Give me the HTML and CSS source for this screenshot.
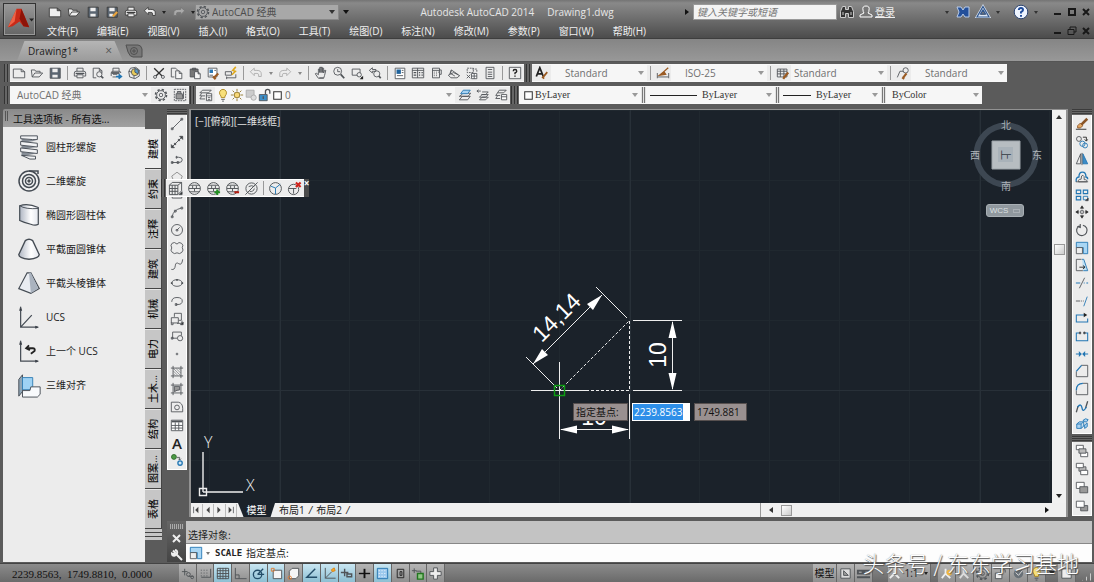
FILE: index.html
```html
<!DOCTYPE html>
<html lang="zh-CN">
<head>
<meta charset="utf-8">
<title>Autodesk AutoCAD 2014 Drawing1.dwg</title>
<link rel="stylesheet" href="styles.css">
</head>
<body>
<svg class="sprite" aria-hidden="true">
  <symbol id="new" viewBox="0 0 16 16"><path d="M1.500 3.500h9l4 3v7h-13zM10.500 3.500v3h4"/></symbol>
  <symbol id="open" viewBox="0 0 16 16"><path d="M2.500 12.500l-1-8h4l1 1.500h5v2M2.500 12.500l3-4.500h9l-4 4.500z"/></symbol>
  <symbol id="save" viewBox="0 0 16 16"><path class="dkfill" d="M2.500 2.500h11.500v11.500h-11.500v-11z"/><path class="whitefill" d="M5 3h6v4h-6zM5 10h6v3h-6z"/></symbol>
  <symbol id="saveas" viewBox="0 0 16 16"><path class="dkfill" d="M2.500 2.500h11.500v11.500h-11.500v-11z"/><path class="whitefill" d="M5 3h6v4h-6zM5 10h4v3h-4z"/><path d="M9 13l5-5" stroke="#e8a33d" stroke-width="2.500"/></symbol>
  <symbol id="print" viewBox="0 0 16 16"><path d="M4.500 6v-3.500h7v3.500M1.500 11.500v-3.500q0-2 2-2h9q2 0 2 2v3.500h-2M1.500 11.500h3M4.500 10h7v3.500h-7z"/><path d="M3 8.500h10" stroke-width="1.500"/></symbol>
  <symbol id="preview" viewBox="0 0 16 16"><path d="M6 13.500h-3.500v-11h7l3 3v3M9.500 2.500v3h3"/><circle cx="9.500" cy="9.500" r="3"/><path d="M11.500 11.500l2.500 2.500" stroke-width="2"/></symbol>
  <symbol id="publish" viewBox="0 0 16 16"><path d="M4.500 6v-3.500h7v3.500M2.500 11.500v-3.500q0-2 2-2h7q2 0 2 2M4.500 9.500h5M4 12.500h4"/><path d="M3 8h9" stroke-width="2"/><path class="blue" d="M8 12h5M11 9.500l3 2.500-3 2.500" stroke-width="2"/></symbol>
  <symbol id="globe" viewBox="0 0 16 16"><path d="M4 2.500l6-1 4 3v7l-5 3-6-2-1-6zM2 6l6 2 6-3M8 8v6"/><circle cx="9" cy="7" r="4" fill="#e9cb59"/><path d="M9 7v-4a4 4 0 0 1 3.500 6z" fill="#5b9fce"/></symbol>
  <symbol id="cut" viewBox="0 0 16 16"><path d="M2.500 2.500l9 9M13.500 2.500l-9 9" stroke="#333" stroke-width="1.500"/><circle cx="3.500" cy="12.500" r="1.700"/><circle cx="12.500" cy="12.500" r="1.700"/></symbol>
  <symbol id="copy" viewBox="0 0 16 16"><path d="M5 12.500h-3.500v-10h5l3 3"/><path fill="#f5f5f5" d="M6.500 5.500h4l3 3v6h-7zM10.500 5.500v3h3"/></symbol>
  <symbol id="paste" viewBox="0 0 16 16"><path fill="#777" d="M2.500 3.500h9v9h-9zM5 2.500h4v2h-4z"/><path fill="#f5f5f5" d="M7.500 6.500h4l2.500 2.500v5.500h-6.500zM11.500 6.500v2.500h2.500"/></symbol>
  <symbol id="match" viewBox="0 0 16 16"><path fill="#fff" d="M2.500 2.500h10v10h-10z"/><path fill="#2a78b5" stroke="none" d="M4 4h4v4h-4z"/><path d="M9.500 5h2M4 10.500h4"/><path d="M9 13.500l5-5M8 12l3 3" stroke="#9a5a22" stroke-width="2.500"/></symbol>
  <symbol id="bedit" viewBox="0 0 16 16"><path d="M1.500 6.500h7v4h-7zM3 13.500h10.500v-4M3 12v3"/><path d="M13.500 1l-3.500 4 3 1-4 4" stroke="#dfa91c" stroke-width="1.800"/></symbol>
  <symbol id="undo" viewBox="0 0 16 16"><path d="M1.500 6.500l4.500-4v2.500h3q5 0 5 4v3h-3v-2q0-1.500-2-1.500h-3v2.500z"/></symbol>
  <symbol id="redo" viewBox="0 0 16 16"><path d="M14.500 6.500l-4.500-4v2.500h-3q-5 0-5 4v3h3v-2q0-1.500 2-1.500h3v2.500z"/></symbol>
  <symbol id="hand" viewBox="0 0 16 16"><path d="M5 14l-3.500-5 1-1 2.500 2v-6.500h1.500v4-6h1.500v6-6h1.500v6-5h1.500v5.500l1-3h1.500l-1.500 6-1 3zM6 13.500h5"/></symbol>
  <symbol id="zoomrt" viewBox="0 0 16 16"><circle cx="6.500" cy="6" r="4.500"/><path d="M6.500 3.500v3h3"/><path d="M10 9.500l4 4.500" stroke-width="2"/></symbol>
  <symbol id="zoomwin" viewBox="0 0 16 16"><path d="M2.500 3.500h9v7h-9z"/><circle cx="10.500" cy="10" r="2.500" fill="#eee"/><path d="M12 12l2 2"/><path fill="#222" stroke="none" d="M11 15h4v-4z"/></symbol>
  <symbol id="zoomprev" viewBox="0 0 16 16"><path d="M1.500 5l3.500-3v2h4v2h-4v2z"/><circle cx="10" cy="9" r="3.500"/><path d="M12.500 11.500l2 2.500" stroke-width="2"/></symbol>
  <symbol id="props" viewBox="0 0 16 16"><path fill="#fff" d="M2.500 2.500h11v12h-11z"/><path fill="#1f639c" stroke="none" d="M4 4h5v5h-5z"/><path d="M10 5h2M10 7.500h2M4.500 11h7"/></symbol>
  <symbol id="grid" viewBox="0 0 16 16"><path d="M1.500 2.500h13v11h-13zM1.500 5h13M7.500 2.500v11"/><path d="M3 7.500h3M3 10.500h3M9 7.500h1.500M12 7.500h1.500M9 10.500h1.500M12 10.500h1.500" stroke-width="1.500"/></symbol>
  <symbol id="palette" viewBox="0 0 16 16"><path d="M4 2.500h8v11h-8zM4 5h8M5.500 7h1M8 7h1M10.500 7h1M5.500 9h1M8 9h1M5.500 11h1M8 11h1M12 4.500h2v5h-2"/></symbol>
  <symbol id="markup" viewBox="0 0 16 16"><path d="M1.500 10.500l6-3 7 3.500-3 2.500h-7zM3 9.500l2-5 8 5.500M5 4.500l-1 4 5 3"/></symbol>
  <symbol id="sheet" viewBox="0 0 16 16"><path stroke-dasharray="2 1" d="M2.500 2.500h7v5h-7zM8.500 3.500h5v4"/><path fill="#fff" d="M7.500 8.500h6v6h-6zM7.500 11.500h6M10.500 8.500v6"/><path d="M2 10l4 4M2 14l4-4"/></symbol>
  <symbol id="calc" viewBox="0 0 16 16"><path d="M3.500 1.500h9v13h-9zM5.500 4h5M5.500 7h5M5.500 9.500h5M5.500 12h5"/></symbol>
  <symbol id="helpbox" viewBox="0 0 16 16"><path d="M1.500 1.500h13v13h-13z"/><path d="M6 6q0-2 2-2t2 2q0 1-2 2v1.500M8 10.800v1.500" stroke="#222" stroke-width="1.600"/></symbol>
  <symbol id="astyle" viewBox="0 0 16 16"><path stroke="#222" d="M1.500 12l4-10 4 10M3 9h5" stroke-width="2"/><path d="M9 13l5-6M8 12.500l2.500 2" stroke="#9a5a22" stroke-width="2"/></symbol>
  <symbol id="dstyle" viewBox="0 0 16 16"><path d="M1.500 8v6M14.500 8v6M2 12.500h12"/><path d="M6 9l8-7M4 10.500l5-4 2 3z" stroke="#9a5a22" stroke-width="1.500" fill="#9a5a22"/></symbol>
  <symbol id="tstyle" viewBox="0 0 16 16"><path d="M1.500 3.500h11v9h-11zM1.500 6h11M1.500 9h11M5 3.500v9M9 3.500v9"/><path d="M9 13.500l5-6M8 13l2 1.500" stroke="#9a5a22" stroke-width="2.500"/></symbol>
  <symbol id="mstyle" viewBox="0 0 16 16"><path d="M1.500 13l3-7h4" /><circle cx="11" cy="5" r="3"/><path d="M8 13.500l4-5M7 13l2.500 1.500" stroke="#9a5a22" stroke-width="2.500"/></symbol>
  <symbol id="gear" viewBox="0 0 16 16"><circle cx="8" cy="8" r="6.300" stroke-dasharray="2.600 2.350" stroke-width="1.800"/><circle cx="8" cy="8" r="5"/><circle cx="8" cy="8" r="2"/></symbol>
  <symbol id="mypal" viewBox="0 0 16 16"><path stroke-dasharray="2 1" d="M1.500 1.500h13v13h-13z"/><path d="M3.500 12.500v-6h7l1 6zM5 6v-2h4v2M12 4v8" fill="#999"/></symbol>
  <symbol id="laymgr" viewBox="0 0 16 16"><path d="M4 2.500h10l-3 3h-10zM3 6l-2 3h6M3 9.500l-2 3h6"/><path fill="#fff" d="M8.500 6.500h6v8h-6zM8.500 9h6M10 11h3M10 13h3"/></symbol>
  <symbol id="bulb" viewBox="0 0 16 16"><path d="M6 11q0-2-1.500-3.500a4 4 0 1 1 7 0q-1.500 1.500-1.500 3.500z" fill="#f8e07a" stroke="#a8841e"/><path d="M6 13h4M7 15h2"/></symbol>
  <symbol id="sun" viewBox="0 0 16 16"><circle cx="8" cy="8" r="3.200" fill="#f8d878" stroke="#8f7224"/><path stroke="#8f7224" d="M8 1v3M8 12v3M1 8h3M12 8h3M3 3l2 2M11 11l2 2M3 13l2-2M11 5l2-2"/></symbol>
  <symbol id="vpf" viewBox="0 0 16 16"><path stroke="#aaa" fill="#ccc" d="M2.500 2.500h9v8h-9z"/><circle cx="11" cy="11" r="3" stroke="#aaa" fill="#ddd"/></symbol>
  <symbol id="lock" viewBox="0 0 16 16"><path fill="#3b8fc9" d="M1.500 7.500h9v7h-9z"/><path d="M8.500 7v-3q0-2.500 2.500-2.500t2.500 2.500v2.500M6 9.500v3" stroke-width="1.500"/></symbol>
  <symbol id="box" viewBox="0 0 16 16"><path fill="#fff" stroke="#333" stroke-width="1.500" d="M2.500 2.500h11v11h-11z"/></symbol>
  <symbol id="layers" viewBox="0 0 16 16"><path d="M5 9.500h9l-3 4h-9.500zM3 8l-1.500 2M5.500 6h9l-3 3.500H2.500z" fill="#eee"/><path class="blue" fill="#a9d3f2" d="M6 2.500h8l-3 4h-8z"/></symbol>
  <symbol id="layprev" viewBox="0 0 16 16"><path d="M7 10.500h7l-3 3h-7zM7 7.500h7l-3 3h-7zM7 4.500h7l-3 3h-5M1.500 3.500h4M3 2l-2 1.500 2 1.500"/></symbol>
  <symbol id="laystate" viewBox="0 0 16 16"><path d="M6 2.500h8l-3 3h-7zM4 5.500l-2 3h5M4 9l-2 3h5"/><path fill="#fff" d="M8.500 7.500h6v6h-6zM8.500 10h6"/></symbol>
  <symbol id="line" viewBox="0 0 16 16"><path d="M2.500 13.500l11-11M1.500 12.500h2v2h-2zM12.500 1.500h2v2h-2z"/></symbol>
  <symbol id="xline" viewBox="0 0 16 16"><path d="M2 14l12-12"/><path fill="#333" d="M1.500 11v3.500h3.500zM11 1.500h3.500v3.500zM5 9.500h1.500v1.500h-1.500zM9.500 5h1.500v1.500h-1.500z"/></symbol>
  <symbol id="pline" viewBox="0 0 16 16"><path d="M2 12h8q4 0 4-3t-4-3h-3M1.500 11h2v2h-2zM8 11h2v2h-2zM7 5h1v2h-1z"/></symbol>
  <symbol id="polygon" viewBox="0 0 16 16"><path stroke="#888" d="M8 2.500l6 4.500-2.500 6.500h-7l-2.500-6.500z"/></symbol>
  <symbol id="rect" viewBox="0 0 16 16"><path d="M2.500 4.500h11v7h-11z"/></symbol>
  <symbol id="arc" viewBox="0 0 16 16"><path d="M2.500 13.500q1-8 10.500-10M1.500 12.500h2v2h-2zM12.500 2.500h2v2h-2zM5 6h2v2h-2z"/></symbol>
  <symbol id="circle" viewBox="0 0 16 16"><circle cx="8" cy="8" r="6.300"/><path d="M8 8l3-3M7 7.500h2v1.500h-2z"/></symbol>
  <symbol id="cloud" viewBox="0 0 16 16"><path d="M8 3.500q2-3 5-1t1 5q2 3-.5 5.500t-5.500.5q-3 2-5.500-.5t-.5-5q-2-3.500.500-5.500t5.500 1z"/></symbol>
  <symbol id="spline" viewBox="0 0 16 16"><path d="M1.500 13q4 1 4.500-4t4-2.500 4.500-5"/></symbol>
  <symbol id="ellipse" viewBox="0 0 16 16"><ellipse cx="8" cy="8" rx="6" ry="3.800"/><path d="M1 8h2M13 8h2M7 4.500h2" stroke-width="2"/></symbol>
  <symbol id="earc" viewBox="0 0 16 16"><path d="M2 9q0-5 6-5t6 4-5 4h-2M6 11h2v2h-2z"/></symbol>
  <symbol id="insert" viewBox="0 0 16 16"><path d="M5 5.500v-4h8v8h-3M1.500 12.500v-6h8v6zM1.500 12v2.500h2v-2M8 13h5l1-3"/><path fill="#222" d="M12 14.500h3v-3z"/></symbol>
  <symbol id="mkblock" viewBox="0 0 16 16"><path d="M3 10.500v-7h10v4M2 10.500h6M1.500 9.500h2v2h-2z"/><circle cx="11.500" cy="10.500" r="3"/></symbol>
  <symbol id="point" viewBox="0 0 16 16"><circle cx="8" cy="8" r="1"/></symbol>
  <symbol id="hatch" viewBox="0 0 16 16"><path d="M3.500 1v14M12.500 1v14M1 3.500h14M1 12.500h14"/><path stroke-width=".6" d="M4 4l8 8M7 4l5 5M10 4l2 2M4 7l5 5M4 10l2 2"/></symbol>
  <symbol id="gradient" viewBox="0 0 16 16"><path d="M3.500 1v14M12.500 1v14M1 3.500h14M1 12.500h14"/><path fill="#999" d="M5 5h6v4q-3 0-6 2z"/></symbol>
  <symbol id="region" viewBox="0 0 16 16"><path d="M1.500 2.500h8q5 1 5 7v4h-13z"/><circle cx="8" cy="8.500" r="2.700"/></symbol>
  <symbol id="table" viewBox="0 0 16 16"><path fill="#fff" d="M1.500 2.500h13v12h-13zM1.500 8.500h13M1.500 11.500h13M6 5v9M10 5v9"/><path d="M2 4h12" stroke-width="2"/></symbol>
  <symbol id="addsel" viewBox="0 0 16 16"><circle cx="4.500" cy="4.500" r="2.800" fill="#4c9a45" stroke="#2b6727"/><circle class="blue" cx="11.500" cy="11.500" r="2.500" fill="#cfe5f6" stroke-width="1.500"/><path d="M8 5h3v3M9.500 6.500l1.500 1.500 1.500-1.500"/></symbol>
  <symbol id="erase" viewBox="0 0 16 16"><path d="M7 9l7-7" stroke="#8a5527" stroke-width="3"/><path fill="#e3a864" stroke="#8a5527" d="M3 10l3-3 3 3-3 2.500h-3z"/><path stroke="#222" d="M1 14h12"/></symbol>
  <symbol id="copyobj" viewBox="0 0 16 16"><circle cx="4.500" cy="4.500" r="2.800"/><circle class="blue" cx="8.500" cy="10" r="3"/><circle class="blue" cx="11.500" cy="12" r="2.800"/><path stroke="#222" d="M9 2.500h4v4M11 5l2 2 1.500-2"/></symbol>
  <symbol id="mirror" viewBox="0 0 16 16"><path d="M6.500 2v11.500h-5z"/><path fill="#3c8cc7" class="blue" d="M9 2l5.500 11.500h-5.500z"/><path d="M8 1v14"/></symbol>
  <symbol id="offset" viewBox="0 0 16 16"><path class="blue" stroke-width="1.500" d="M1.500 13.500q-1-5 3-5.500 0-5.500 4-5.500t4 5.500q2 0 2 2.500"/><path d="M4 13.500q-1-3 3-3 0-5 2-4.500t1.500 5q4 0 3 2.500zM1 13.500h14"/></symbol>
  <symbol id="array" viewBox="0 0 16 16"><path class="blue" stroke-width="1.300" d="M1.500 2.500h5v4h-5zM9.500 2.500h5v4h-5zM1.500 9.500h5v4h-5z"/><path class="blue" d="M9.500 9.500h5v4h-5z"/><path fill="#222" d="M12 14.500h3v-3z"/></symbol>
  <symbol id="move" viewBox="0 0 16 16"><path d="M8 1v4M8 11v4M1 8h4M11 8h4M6.500 6.500h3v3h-3z"/><path fill="#333" stroke="none" d="M5.500 4h5l-2.500-3.500zM5.500 12h5l-2.500 3.500zM4 5.500v5l-3.500-2.500zM12 5.500v5l3.500-2.500z"/></symbol>
  <symbol id="rotate" viewBox="0 0 16 16"><path d="M9 2.500a6 6 0 1 1-4 .6M6 1v4l-3.500-1" stroke-width="1.300"/></symbol>
  <symbol id="scale" viewBox="0 0 16 16"><path class="blue" fill="#a9d6f4" d="M1.500 1.500h13v13h-5v-7h-8z"/><path fill="#eee" d="M1.500 7.500h7v7h-7z"/></symbol>
  <symbol id="stretch" viewBox="0 0 16 16"><path d="M9 14.500h-7.500v-13h6"/><path class="blue" fill="#bfe0f5" d="M8 1.500h2l4.500 13h-5"/><path stroke="#222" d="M5 10.500h6M9 8.500l2.500 2-2.500 2"/></symbol>
  <symbol id="trim" viewBox="0 0 16 16"><path class="blue" d="M1 8h5M10 8h1M13 8h2" stroke-width="1.400"/><path d="M5 14l6-12"/></symbol>
  <symbol id="extend" viewBox="0 0 16 16"><path d="M1 8h5M7 8h1M9 8h1"/><path class="blue" d="M10 14l4-11"/></symbol>
  <symbol id="breakat" viewBox="0 0 16 16"><path class="blue" stroke-width="1.200" d="M12 4.500h-10.500v8h13v-4"/><path fill="#222" stroke="none" d="M10 2v5l4-2.500z"/></symbol>
  <symbol id="break" viewBox="0 0 16 16"><path class="blue" stroke-width="1.200" d="M5 4.500h-3.500v9h13v-9h-3.500"/><path fill="#222" d="M5 3.500h1.500v2h-1.500zM10 3.500h1.500v2h-1.500z"/></symbol>
  <symbol id="join" viewBox="0 0 16 16"><path class="blue" stroke-width="1.200" d="M1 8h6M9 8h6M5 6l2 2-2 2zM11 6l-2 2 2 2z"/></symbol>
  <symbol id="chamfer" viewBox="0 0 16 16"><path d="M7 1.500h7.500v13h-13v-6"/><path class="blue" d="M1.500 8.500l6-7" stroke-width="1.500"/></symbol>
  <symbol id="fillet" viewBox="0 0 16 16"><path d="M9 1.500h5.500v13h-13v-5"/><path class="blue" d="M1.500 9.500q0-8 7.500-8" stroke-width="1.500"/></symbol>
  <symbol id="blend" viewBox="0 0 16 16"><path d="M1.500 14l2-7M12 9.500l2.500-8" stroke-width="1.500"/><path class="blue" stroke-width="1.500" d="M3 8q4-5 5 1t5-1"/></symbol>
  <symbol id="explode" viewBox="0 0 16 16"><path class="blue" fill="#a9d3f2" d="M2 8l3-2.500h5l-3 2.500zM2 8v5h5v-5M7 13l3-2.500v-5M9 4l3-2 3 1-2 3zM11 9l3-2v4l-3 2z"/></symbol>
  <symbol id="ord1" viewBox="0 0 16 16"><path fill="#fff" d="M1.500 1.500h8v5h-8zM6.500 9.500h8v5h-8z"/><path fill="#bbb" d="M4.500 5.500h8v5h-8z"/></symbol>
  <symbol id="ord2" viewBox="0 0 16 16"><path fill="#bbb" d="M4.500 5.500h8v5h-8z"/><path fill="#fff" d="M1.500 1.500h8v5h-8zM6.500 9.500h8v5h-8z"/></symbol>
  <symbol id="ord3" viewBox="0 0 16 16"><path fill="#fff" d="M1.500 1.500h9v7h-9z"/><path fill="#999" d="M5.500 6.500h9v7h-9z"/></symbol>
  <symbol id="ord4" viewBox="0 0 16 16"><path fill="#999" d="M6.500 7.500h8v6h-8z"/><path fill="#fff" d="M1.500 2.500h9v7h-9z"/></symbol>
  <symbol id="cube" viewBox="0 0 16 16"><path d="M1.500 4.500h9v10h-9zM1.500 4.500l3-3h10v9l-4 4M10.500 4.500l4-3M4.500 4.500v10M7.500 4.500v10M1.500 8h9M1.500 11h9"/><path fill="#222" d="M12 14.500h3v-3z"/></symbol>
  <symbol id="ball" viewBox="0 0 16 16"><circle cx="8" cy="8" r="6.300"/><path d="M3 4.500h10M2 8h12M3 11.500h10M6 5v3M10 5v3M8 8v3"/></symbol>
  <symbol id="ballplus" viewBox="0 0 16 16"><use href="#ball"/><path d="M12 9v6M9 12h6" stroke="#239023" stroke-width="2.200"/></symbol>
  <symbol id="ballminus" viewBox="0 0 16 16"><use href="#ball"/><path d="M10 12h5" stroke="#b51d12" stroke-width="2.200"/></symbol>
  <symbol id="ballno" viewBox="0 0 16 16"><circle cx="8" cy="8" r="6"/><path d="M1.500 14.500l13-13M5 6q3-2 6 0M6 11q4 1 5-3"/></symbol>
  <symbol id="swivel" viewBox="0 0 16 16"><circle cx="8" cy="8" r="6.300"/><path class="blue" d="M3 5.500l5 2 5-4M8 7.500v6.500"/></symbol>
  <symbol id="ballx" viewBox="0 0 16 16"><circle cx="7" cy="9" r="5.500"/><path d="M2 8h8M7 7.500v6"/><path d="M9.500 1.500l5 5M14.500 1.500l-5 5" stroke="#d0221a" stroke-width="2.200"/></symbol>
  <symbol id="helix" viewBox="0 0 24 28"><path stroke="none" fill="#878e97" d="M4 5l16 2-16 3zM4 12l16 2-16 3zM4 19l16 2-16 3z"/><path fill="#f2f3f5" d="M3 2h18v4h-5l-13-1zM3 8l18 2v4l-18-2zM3 15l18 2v4l-18-2zM4 23l15 1v3h-6z"/></symbol>
  <symbol id="spiral" viewBox="0 0 24 24"><circle cx="12" cy="12" r="10" fill="#f2f2f2" stroke-width="1.500"/><circle cx="12" cy="12" r="6.500" stroke-width="1.500"/><circle cx="12" cy="12" r="3.500" stroke-width="1.500"/><circle cx="12" cy="12" r="1.200" fill="#555"/><path d="M12 2h9v3" stroke-width="1.500"/></symbol>
  <symbol id="ecyl" viewBox="0 0 24 28"><defs><linearGradient id="g1"><stop stop-color="#aeb5c2"/><stop offset=".6" stop-color="#fff"/><stop offset="1" stop-color="#e4e7ed"/></linearGradient></defs><path fill="url(#g1)" stroke-width="1.300" d="M2 4q9-3 20 2v18q-3 2-8 0-8-2-12-4z"/><path d="M2 4q6 4 20 3"/></symbol>
  <symbol id="cone" viewBox="0 0 24 28"><path fill="url(#g1)" stroke-width="1.500" d="M8 5q4-3 8 0l7 15q0 4-11 5-11-1-11-5z"/></symbol>
  <symbol id="pyr" viewBox="0 0 24 28"><path fill="#e9ecf1" stroke-width="1.300" d="M10 3h4l9 17-9 5-13-5z"/><path fill="#aab3bf" stroke="none" d="M12 3h2l8 17-8 5z"/></symbol>
  <symbol id="ucs" viewBox="0 0 24 28"><path stroke-width="1.300" d="M3 6v19h18M3 25l12-13"/><path fill="#222" d="M2 7l1-4 1 4zM19 24l3 1-3 1z"/></symbol>
  <symbol id="ucsprev" viewBox="0 0 24 28"><path stroke-width="1.300" d="M3 6v19h18"/><path fill="#222" d="M2 7l1-4 1 4zM19 24l3 1-3 1z"/><path stroke-width="2" stroke="#222" d="M10 11h6q3 0 2 3l-4 3M12 8l-3 3 4 2"/></symbol>
  <symbol id="align" viewBox="0 0 24 28"><path fill="#8fa5b5" d="M1 8l4-5v18l-4 5z"/><path fill="#9ed2f4" stroke="#3380b5" d="M5 6h11v13h-11z"/><path fill="#f8fafc" d="M5 20h8l1-4h10v8l-3 3h-16z"/></symbol>
</svg>

<header class="titlebar">
  <button class="app" aria-label="应用程序菜单">
    <svg viewBox="0 0 32 32"><path fill="#c92a18" d="M4 24L13 5h5l8 19-6-1-4-5-7 5z"/><path fill="#ee6447" d="M13 5l-2 13-7 6z"/><path fill="#8e1408" d="M18 5l8 19-6-1-4-8z"/><path fill="#222" d="M26 15h5l-2.500 3z"/></svg>
  </button>
  <div class="titlecol">
    <div class="titlerow">
      <div class="quick">
        <button class="q" aria-label="新建"><svg><use href="#new"/></svg></button>
        <button class="q" aria-label="打开"><svg><use href="#open"/></svg></button>
        <button class="q" aria-label="保存"><svg><use href="#save"/></svg></button>
        <button class="q" aria-label="另存为"><svg><use href="#saveas"/></svg></button>
        <button class="q" aria-label="打印"><svg><use href="#print"/></svg></button>
        <button class="q" aria-label="放弃"><svg><use href="#undo"/></svg></button><i class="tri small"></i>
        <button class="q dim" aria-label="重做"><svg><use href="#redo"/></svg></button><i class="tri small"></i>
      </div>
      <div class="combo wstop"><svg><use href="#gear"/></svg><select aria-label="工作空间"><option>AutoCAD 经典</option></select></div>
      <i class="tri more"></i>
      <h1 class="apptitle"><span>Autodesk AutoCAD 2014</span><span>Drawing1.dwg</span></h1>
      <i class="tri right"></i>
      <input class="search" type="text" placeholder="键入关键字或短语" aria-label="搜索">
      <div class="account">
        <button class="q" aria-label="搜索"><svg viewBox="0 0 16 16"><path fill="#333" stroke="#ccc" d="M1.500 13.500v-6l2-5h3v3h3v-3h3l2 5v6h-5v-4h-3v4z"/><path stroke="#ccc" d="M4 8v3M12 8v3"/></svg></button>
        <button class="q" aria-label="用户"><svg viewBox="0 0 16 16"><path stroke="#fff" fill="#777" d="M8 2q4 0 3 4 0 2-1 3l4 2v2h-12v-2l4-2q-1-1-1-3-1-4 3-4z"/></svg></button>
        <button class="login">登录</button>
      </div>
      <div class="services">
        <i class="tri small"></i>
        <button class="q" aria-label="Exchange"><svg viewBox="0 0 16 16"><path fill="#24509a" stroke="#b8cbe8" d="M2 3h4l2 3 2-3h4v10h-4l-2-3-2 3h-4l2-5z"/></svg></button>
        <button class="q" aria-label="Autodesk 360"><svg viewBox="0 0 16 16"><path stroke="#dbe6f5" stroke-width="3" d="M8 3l5.500 9.500h-11z"/><path stroke="#31568c" stroke-width="1.200" d="M8 2.500l6 10.500h-12zM5.500 10l2.500-4 2.500 4z"/></svg></button><i class="tri small"></i>
        <button class="q help" aria-label="帮助"><svg viewBox="0 0 16 16"><circle cx="8" cy="8" r="6.800" fill="#eef4ff" stroke="#2d4470"/><path stroke="#1f4c9c" stroke-width="2" d="M5.800 6q.2-2 2.200-2t2 2q0 1-2 2.200v1.300M8 11v1.700"/></svg></button><i class="tri small"></i>
      </div>
      <div class="wins">
        <button aria-label="最小化"><svg viewBox="0 0 10 10"><path d="M1 7h7"/></svg></button>
        <button aria-label="最大化"><svg viewBox="0 0 10 10"><path d="M2 2h6v6h-6z"/></svg></button>
        <button aria-label="关闭"><svg viewBox="0 0 10 10"><path d="M2 2l6 6M8 2l-6 6"/></svg></button>
      </div>
    </div>
    <nav class="menus">
      <button>文件(F)</button><button>编辑(E)</button><button>视图(V)</button><button>插入(I)</button><button>格式(O)</button><button>工具(T)</button><button>绘图(D)</button><button>标注(N)</button><button>修改(M)</button><button>参数(P)</button><button>窗口(W)</button><button>帮助(H)</button>
      <div class="wins">
        <button aria-label="最小化图形"><svg viewBox="0 0 10 10"><path d="M1 7h7"/></svg></button>
        <button aria-label="还原图形"><svg viewBox="0 0 10 10"><path class="thin" d="M3 3v-2h6v5h-2M1 3.500h6v5h-6z"/></svg></button>
        <button aria-label="关闭图形"><svg viewBox="0 0 10 10"><path d="M2 2l6 6M8 2l-6 6"/></svg></button>
      </div>
    </nav>
  </div>
</header>

<div class="filetabs">
  <div class="filetab"><span>Drawing1*</span><button aria-label="关闭">×</button></div>
  <button class="newtab" aria-label="新建选项卡"><svg viewBox="0 0 18 14"><path fill="#777" stroke="#505050" d="M1 1h12q3 0 4 4v8h-9q-3 0-5-5z"/><circle cx="9" cy="7" r="3.500" stroke="#505050"/><path stroke="#505050" d="M7 7h4M9 5v4"/></svg></button>
</div>

<div class="bars">
  <div class="barrow">
    <div class="bar">
      <i class="grip"></i>
      <button class="t" aria-label="新建"><svg><use href="#new"/></svg></button>
      <button class="t" aria-label="打开"><svg><use href="#open"/></svg></button>
      <button class="t" aria-label="保存"><svg><use href="#save"/></svg></button>
      <i class="sep"></i>
      <button class="t" aria-label="打印"><svg><use href="#print"/></svg></button>
      <button class="t" aria-label="打印预览"><svg><use href="#preview"/></svg></button>
      <button class="t" aria-label="发布"><svg><use href="#publish"/></svg></button>
      <button class="t" aria-label="三维打印"><svg><use href="#globe"/></svg></button>
      <i class="sep"></i>
      <button class="t" aria-label="剪切"><svg><use href="#cut"/></svg></button>
      <button class="t" aria-label="复制"><svg><use href="#copy"/></svg></button>
      <button class="t" aria-label="粘贴"><svg><use href="#paste"/></svg></button>
      <button class="t" aria-label="特性匹配"><svg><use href="#match"/></svg></button>
      <button class="t" aria-label="块编辑器"><svg><use href="#bedit"/></svg></button>
      <i class="sep"></i>
      <button class="t off" aria-label="放弃"><svg><use href="#undo"/></svg></button><span class="drop"><i class="tri small"></i></span>
      <button class="t off" aria-label="重做"><svg><use href="#redo"/></svg></button><span class="drop"><i class="tri small"></i></span>
      <i class="sep"></i>
      <button class="t" aria-label="平移"><svg><use href="#hand"/></svg></button>
      <button class="t" aria-label="实时缩放"><svg><use href="#zoomrt"/></svg></button>
      <button class="t" aria-label="窗口缩放"><svg><use href="#zoomwin"/></svg></button>
      <button class="t" aria-label="缩放上一个"><svg><use href="#zoomprev"/></svg></button>
      <i class="sep"></i>
      <button class="t" aria-label="特性"><svg><use href="#props"/></svg></button>
      <button class="t" aria-label="设计中心"><svg><use href="#grid"/></svg></button>
      <button class="t" aria-label="工具选项板"><svg><use href="#palette"/></svg></button>
      <button class="t" aria-label="图纸集"><svg><use href="#markup"/></svg></button>
      <button class="t" aria-label="标记集"><svg><use href="#sheet"/></svg></button>
      <button class="t" aria-label="计算器"><svg><use href="#calc"/></svg></button>
      <i class="sep"></i>
      <button class="t" aria-label="帮助"><svg><use href="#helpbox"/></svg></button>
    </div>
    <div class="bar">
      <i class="grip"></i>
      <button class="t wide" aria-label="文字样式"><svg><use href="#astyle"/></svg></button>
      <div class="combo style indent"><select aria-label="文字样式"><option>Standard</option></select></div>
      <i class="sep"></i>
      <button class="t wide" aria-label="标注样式"><svg><use href="#dstyle"/></svg></button>
      <div class="combo style indent"><select aria-label="标注样式"><option>ISO-25</option></select></div>
      <i class="sep"></i>
      <button class="t wide" aria-label="表格样式"><svg><use href="#tstyle"/></svg></button>
      <div class="combo style"><select aria-label="表格样式"><option>Standard</option></select></div>
      <i class="sep"></i>
      <button class="t wide" aria-label="多重引线样式"><svg><use href="#mstyle"/></svg></button>
      <div class="combo style indent"><select aria-label="多重引线样式"><option>Standard</option></select></div>
    </div>
  </div>
  <div class="barrow">
    <div class="bar">
      <i class="grip"></i>
      <div class="combo ws"><select aria-label="工作空间控制"><option>AutoCAD 经典</option></select></div>
      <button class="t wide" aria-label="工作空间设置"><svg><use href="#gear"/></svg></button>
      <button class="t wide" aria-label="我的工作空间"><svg><use href="#mypal"/></svg></button>
    </div>
    <div class="bar">
      <i class="grip"></i>
      <button class="t wide" aria-label="图层特性管理器"><svg><use href="#laymgr"/></svg></button>
      <div class="combo layer"><svg><use href="#bulb"/></svg><svg><use href="#sun"/></svg><svg><use href="#vpf"/></svg><svg><use href="#lock"/></svg><svg class="nar"><use href="#box"/></svg><select aria-label="图层"><option>0</option></select></div>
      <button class="t wide" aria-label="置为当前"><svg><use href="#layers"/></svg></button>
      <button class="t" aria-label="上一个图层"><svg><use href="#layprev"/></svg></button>
      <button class="t" aria-label="图层状态"><svg><use href="#laystate"/></svg></button>
    </div>
    <div class="bar props">
      <i class="grip"></i>
      <div class="combo color"><svg class="nar"><use href="#box"/></svg><select aria-label="颜色"><option>ByLayer</option></select></div>
      <i class="sep"></i>
      <div class="combo ltype"><i class="ln"></i><select aria-label="线型"><option>ByLayer</option></select></div>
      <i class="sep"></i>
      <div class="combo lweight"><i class="ln"></i><select aria-label="线宽"><option>ByLayer</option></select></div>
      <i class="sep"></i>
      <div class="combo plot"><select aria-label="打印样式"><option>ByColor</option></select></div>
    </div>
  </div>
</div>

<main class="work">
  <aside class="palette">
    <h2><i></i>工具选项板 - 所有选...</h2>
    <div class="palbody">
      <ul>
        <li><button><svg><use href="#helix"/></svg>圆柱形螺旋</button></li>
        <li><button><svg><use href="#spiral"/></svg>二维螺旋</button></li>
        <li><button><svg><use href="#ecyl"/></svg>椭圆形圆柱体</button></li>
        <li><button><svg><use href="#cone"/></svg>平截面圆锥体</button></li>
        <li><button><svg><use href="#pyr"/></svg>平截头棱锥体</button></li>
        <li><button><svg><use href="#ucs"/></svg>UCS</button></li>
        <li><button><svg><use href="#ucsprev"/></svg>上一个 UCS</button></li>
        <li><button><svg><use href="#align"/></svg>三维对齐</button></li>
      </ul>
      <div class="paltabs">
        <button class="on"><span>建模</span></button><button><span>约束</span></button><button><span>注释</span></button><button><span>建筑</span></button><button><span>机械</span></button><button><span>电力</span></button><button><span>土木...</span></button><button><span>结构</span></button><button><span>图案...</span></button><button><span>表格</span></button><i></i>
      </div>
    </div>
  </aside>

  <section class="center">
    <div class="stage">
      <div class="vbar draw">
        <i class="vgrip"></i>
        <div class="vtools">
          <button aria-label="直线"><svg><use href="#line"/></svg></button>
          <button aria-label="构造线"><svg><use href="#xline"/></svg></button>
          <button aria-label="多段线"><svg><use href="#pline"/></svg></button>
          <button aria-label="多边形"><svg><use href="#polygon"/></svg></button>
          <button aria-label="矩形"><svg><use href="#rect"/></svg></button>
          <button aria-label="圆弧"><svg><use href="#arc"/></svg></button>
          <button aria-label="圆"><svg><use href="#circle"/></svg></button>
          <button aria-label="修订云线"><svg><use href="#cloud"/></svg></button>
          <button aria-label="样条曲线"><svg><use href="#spline"/></svg></button>
          <button aria-label="椭圆"><svg><use href="#ellipse"/></svg></button>
          <button aria-label="椭圆弧"><svg><use href="#earc"/></svg></button>
          <button aria-label="插入块"><svg><use href="#insert"/></svg></button>
          <button aria-label="创建块"><svg><use href="#mkblock"/></svg></button>
          <button aria-label="点"><svg><use href="#point"/></svg></button>
          <button aria-label="图案填充"><svg><use href="#hatch"/></svg></button>
          <button aria-label="渐变色"><svg><use href="#gradient"/></svg></button>
          <button aria-label="面域"><svg><use href="#region"/></svg></button>
          <button aria-label="表格"><svg><use href="#table"/></svg></button>
          <button class="mtext" aria-label="多行文字">A</button>
          <button aria-label="添加选定对象"><svg><use href="#addsel"/></svg></button>
        </div>
      </div>

      <div class="frame">
        <div class="view">
          <div class="canvas">
            <svg class="drawing">
              <defs>
                <pattern id="gridlines" width="70" height="70" patternUnits="userSpaceOnUse" x="18" y="0"><path d="M.5 0v70M0 .5h70" stroke="#20282f" fill="none"/></pattern>
                <pattern id="gridlines2" width="350" height="350" patternUnits="userSpaceOnUse" x="89" y="280"><path d="M.5 0v350M0 .5h350" stroke="#283038" fill="none"/></pattern>
              </defs>
              <rect width="100%" height="100%" fill="url(#gridlines)" stroke="none"/>
              <rect width="100%" height="100%" fill="url(#gridlines2)" stroke="none"/>
              <g class="ucsmark">
                <path d="M8.500 378.500h7v7h-7zM12 382v-40M12 382h40" stroke-width="1.400"/>
                <text x="13" y="338">Y</text><text x="55" y="381">X</text>
              </g>
              <path d="M340 280.500h55M368.500 252v77M442 280.500h49M442 210.500h49M481.500 212v67M438.500 284v45M370 319.500h67M342 254l69-69M405 177l31 31M335 247l31 31"/>
              <path stroke-dasharray="3 2" d="M395 280.500h43.500v-70L368.500 280.500"/>
              <g class="arrows">
                <path d="M481.500 211l4 17h-8zM481.500 280l4-17h-8zM369 319.500l17-4v8zM438 319.500l-17-4v8zM411 185l-9 15-6-6zM342 254l15-9-6-6z"/>
              </g>
              <g class="dims">
                <text transform="translate(475 245) rotate(-90)">10</text>
                <text transform="translate(371 213) rotate(-45)">14,14</text>
                <text transform="translate(403 315)">10</text>
              </g>
              <path class="snap" d="M363.500 275.500h10v10h-10z"/>
            </svg>
            <div class="vplabel">[−][俯视][二维线框]</div>
            <div class="viewcube">
              <svg viewBox="0 0 74 74"><circle cx="37" cy="37" r="29.500" stroke="#3d4752" stroke-width="6"/><path fill="#b7bdc1" stroke="#9da4a9" d="M23 23h28v28h-28z"/><path fill="#a9b2b9" stroke="none" d="M29 29h15v15h-15z"/><text x="37" y="41" transform="rotate(90 37 37)">上</text></svg>
              <span class="n">北</span><span class="s">南</span><span class="w">西</span><span class="e">东</span>
            </div>
            <button class="wcs">WCS <i></i></button>
            <div class="dyn">
              <label for="dx">指定基点:</label>
              <input id="dx" class="sel" value="2239.8563">
              <input class="dy" value="1749.881" aria-label="Y">
            </div>
          </div>
          <div class="vscroll"><i class="tri up"></i><i class="thumb"></i><i class="tri"></i></div>
        </div>
        <div class="layouts">
          <div class="nav"><button aria-label="第一个"><svg viewBox="0 0 10 10"><path d="M2 1v8"/><path class="f" d="M8 1v8l-4-4z"/></svg></button><button aria-label="上一个"><svg viewBox="0 0 10 10"><path class="f" d="M7 1v8l-4-4z"/></svg></button><button aria-label="下一个"><svg viewBox="0 0 10 10"><path class="f" d="M3 1v8l4-4z"/></svg></button><button aria-label="最后一个"><svg viewBox="0 0 10 10"><path d="M8 1v8"/><path class="f" d="M2 1v8l4-4z"/></svg></button></div>
          <button class="ltab on">模型</button><button class="ltab">布局1</button><i>/</i><button class="ltab">布局2</button><i>/</i>
          <div class="hscroll"><i class="tri left"></i><i class="thumb"></i><i class="tri right"></i></div>
        </div>
      </div>

      <div class="rightbars">
        <div class="vbar modify">
          <i class="vgrip"></i>
          <div class="vtools">
            <button aria-label="删除"><svg><use href="#erase"/></svg></button>
            <button aria-label="复制"><svg><use href="#copyobj"/></svg></button>
            <button aria-label="镜像"><svg><use href="#mirror"/></svg></button>
            <button aria-label="偏移"><svg><use href="#offset"/></svg></button>
            <button aria-label="阵列"><svg><use href="#array"/></svg></button>
            <button aria-label="移动"><svg><use href="#move"/></svg></button>
            <button aria-label="旋转"><svg><use href="#rotate"/></svg></button>
            <button aria-label="缩放"><svg><use href="#scale"/></svg></button>
            <button aria-label="拉伸"><svg><use href="#stretch"/></svg></button>
            <button aria-label="修剪"><svg><use href="#trim"/></svg></button>
            <button aria-label="延伸"><svg><use href="#extend"/></svg></button>
            <button aria-label="打断于点"><svg><use href="#breakat"/></svg></button>
            <button aria-label="打断"><svg><use href="#break"/></svg></button>
            <button aria-label="合并"><svg><use href="#join"/></svg></button>
            <button aria-label="倒角"><svg><use href="#chamfer"/></svg></button>
            <button aria-label="圆角"><svg><use href="#fillet"/></svg></button>
            <button aria-label="光顺曲线"><svg><use href="#blend"/></svg></button>
            <button aria-label="分解"><svg><use href="#explode"/></svg></button>
          </div>
        </div>
        <div class="vbar order">
          <i class="vgrip"></i>
          <div class="vtools">
            <button aria-label="前置"><svg><use href="#ord1"/></svg></button>
            <button aria-label="后置"><svg><use href="#ord2"/></svg></button>
            <button aria-label="置于对象之上"><svg><use href="#ord3"/></svg></button>
            <button aria-label="置于对象之下"><svg><use href="#ord4"/></svg></button>
          </div>
        </div>
      </div>

      <div class="floatbar">
        <i class="grip"></i>
        <button class="t" aria-label="平滑对象"><svg><use href="#cube"/></svg></button>
        <button class="t" aria-label="平滑网格"><svg><use href="#ball"/></svg></button>
        <button class="t" aria-label="提高平滑度"><svg><use href="#ballplus"/></svg></button>
        <button class="t" aria-label="降低平滑度"><svg><use href="#ballminus"/></svg></button>
        <button class="t" aria-label="优化网格"><svg><use href="#ballno"/></svg></button>
        <i class="sep"></i>
        <button class="t" aria-label="添加锐化"><svg><use href="#swivel"/></svg></button>
        <button class="t" aria-label="删除锐化"><svg><use href="#ballx"/></svg></button>
        <button class="x" aria-label="关闭">×</button>
      </div>
    </div>

    <div class="command">
      <div class="cmdside">
        <i></i>
        <button aria-label="关闭"><svg viewBox="0 0 12 12"><path stroke-width="2" d="M2 2l7 7M9 2l-7 7"/></svg></button>
        <button aria-label="自定义"><svg viewBox="0 0 12 12"><path stroke-width="2" d="M5 5l6 6M2 1.500l2 2-1 2-2-1q0 3 3 2l2-2q1-3-2-3.500"/></svg></button>
      </div>
      <div class="cmdmain">
        <div class="history">选择对象:</div>
        <label class="prompt"><svg><use href="#scale"/></svg><i class="tri small"></i><b>SCALE</b><span>指定基点:</span><input type="text" aria-label="命令"></label>
      </div>
    </div>
  </section>
</main>

<footer class="status">
  <output>2239.8563,&nbsp; 1749.8810,&nbsp; 0.0000</output>
  <div class="modes">
    <button aria-label="推断约束"><svg viewBox="0 0 16 16"><path d="M2 6h6M5 3v7M9 11h5"/><circle cx="9" cy="9" r="2"/><circle cx="13" cy="12" r="1.500"/></svg></button>
    <button aria-label="捕捉"><svg viewBox="0 0 16 16"><path stroke-dasharray="1 2" d="M3 4.500h9M3 7.500h9M3 10.500h9"/><path d="M13.500 3v9h-10"/></svg></button>
    <button class="lit" aria-label="栅格"><svg viewBox="0 0 16 16"><path d="M2.500 2.500h12v11h-12zM2 5h13M2 8h13M2 11h13M5.500 2v12M8.500 2v12M11.500 2v12"/></svg></button>
    <button aria-label="正交"><svg viewBox="0 0 16 16"><path d="M2.500 2v11.500h12M2.500 9.500h4v4"/></svg></button>
    <button class="lit" aria-label="极轴"><svg viewBox="0 0 16 16"><circle cx="7" cy="9" r="4.500" stroke="#234d68" stroke-width="1.400"/><path stroke="#234d68" stroke-width="1.400" d="M7 9l6-6M7 9h7"/></svg></button>
    <button class="lit" aria-label="对象捕捉"><svg viewBox="0 0 16 16"><path fill="#f5f5f5" d="M4.500 4.500h9v9h-9z"/><path stroke="#e07e35" d="M2.500 2.500h3v3h-3z"/></svg></button>
    <button aria-label="三维对象捕捉"><svg viewBox="0 0 16 16"><path fill="#f5f5f5" d="M3.500 5.500l3-3h7v8l-3 3h-7z"/><circle cx="4" cy="12.500" r="1.800" stroke="#e07e35"/></svg></button>
    <button class="lit" aria-label="对象追踪"><svg viewBox="0 0 16 16"><path stroke="#234d68" stroke-width="1.500" d="M12 3l-9 9h11"/></svg></button>
    <button class="lit" aria-label="动态 UCS"><svg viewBox="0 0 16 16"><path d="M3.500 2v11h11M3.500 13l7-7"/><path fill="#f3a92e" stroke="#d98315" d="M10 4l3-2 1 3-3 1z"/></svg></button>
    <button class="lit" aria-label="动态输入"><svg viewBox="0 0 16 16"><path stroke-width="1.500" d="M2 7h8M6 3v8M8.500 8.500h5v3h-5z"/></svg></button>
    <button aria-label="线宽"><svg viewBox="0 0 16 16"><path stroke="#111" stroke-width="1.500" d="M2 8h12"/><path stroke="#111" stroke-width="2" d="M8 3v10"/></svg></button>
    <button class="lit" aria-label="透明度"><svg viewBox="0 0 16 16"><path fill="#9cc9ed" stroke="#2575b0" d="M2.500 2.500h11v11h-11z"/><path stroke="#fff" stroke-dasharray="1 2" d="M4 5h9M4 8h9M4 11h9"/></svg></button>
    <button aria-label="快捷特性"><svg viewBox="0 0 16 16"><path stroke="#222" d="M4.500 3.500h7v9h-7zM7.500 6v4h2v-4z"/></svg></button>
    <button aria-label="选择循环"><svg viewBox="0 0 16 16"><path d="M2 5h5M4.500 2.500v5M6.500 5.500h5v5"/><path fill="#8fc784" stroke="#21761e" stroke-width="1.500" d="M8 8h6v6h-6z"/></svg></button>
    <button aria-label="注释监视器"><svg viewBox="0 0 16 16"><path fill="#eee" d="M6 2h4v4h4v4h-4v4h-4v-4h-4v-4h4z"/></svg></button>
  </div>
  <div class="tray">
    <button class="model">模型</button>
    <button aria-label="快速查看布局"><svg viewBox="0 0 16 16"><path fill="#ddd" d="M3 3h10v10h-10zM6 5v5h5M6 5l5 5"/></svg></button>
    <button aria-label="快速查看图形"><svg viewBox="0 0 16 16"><path stroke-width="2" fill="#ddd" d="M2 5h5v3h-5zM9 5h5v3h-5zM1 12h14"/></svg></button>
    <button class="ratio" aria-label="注释比例"><svg viewBox="0 0 16 16"><path stroke="#eee" stroke-width="2" d="M8 2v6l-5 5M8 8l5 5"/></svg>1:1<i class="tri small"></i></button>
    <button aria-label="注释可见性"><svg viewBox="0 0 16 16"><path stroke="#eee" stroke-width="2" d="M7 3v5l-4 5M7 8l5 5"/><circle cx="11" cy="7" r="3" fill="#f2b740" stroke="none"/></svg></button>
    <button aria-label="自动添加比例"><svg viewBox="0 0 16 16"><path stroke="#ddd" stroke-width="2" d="M7 3v5l-4 5M7 8l5 5"/></svg></button>
    <button aria-label="切换工作空间"><svg><use href="#gear"/></svg></button>
    <button aria-label="锁定"><svg viewBox="0 0 16 16"><path fill="#eee" d="M2.500 7.500h7v6h-7z"/><path d="M8 7v-3h5v3"/></svg></button>
    <button aria-label="硬件加速"><svg viewBox="0 0 16 16"><circle cx="8" cy="8" r="5" fill="#687077" stroke="none"/><path stroke="#ddd" d="M5 7l3 3 4-5"/></svg></button>
    <button aria-label="隔离对象"><svg><use href="#bulb"/></svg></button>
    <i class="tri"></i>
    <button aria-label="全屏显示"><svg viewBox="0 0 16 16"><path fill="#eee" d="M3 3h10v10h-10z"/></svg></button>
    <i class="resize"></i>
  </div>
</footer>
<div class="watermark">头条号 / 东东学习基地</div>
</body>
</html>
```

FILE: styles.css
```css
* { box-sizing: border-box; }
body {
  margin: 0;
  height: 100vh;
  display: flex;
  flex-direction: column;
  background: #5b5b5b;
  color: #222;
  font: 10px/14px "Open Sans", "Noto Sans CJK SC", sans-serif;
  overflow: hidden;
  position: relative;
}
button, input, select { font: inherit; color: inherit; border: 0; padding: 0; margin: 0; background: none; border-radius: 0; }
button { display: flex; align-items: center; justify-content: center; flex: none; white-space: nowrap; }
svg { width: 16px; height: 16px; fill: none; stroke: #505458; flex: none; display: block; }
.sprite { position: absolute; width: 0; height: 0; }
.dkfill { fill: #5a6571; }
.whitefill { fill: #eee; stroke: none; }
.blue { stroke: #2276b3; }

.tri { width: 0; height: 0; flex: none; border: 3px solid transparent; border-top: 4px solid #222; border-bottom: 0; }
.tri.small { border-width: 2px; border-top-width: 3px; border-bottom-width: 0; }
.tri.right { border: 3px solid transparent; border-left: 4px solid #111; border-right: 0; }
.tri.left { border: 3px solid transparent; border-right: 4px solid #333; border-left: 0; }
.tri.up { border: 3px solid transparent; border-bottom: 4px solid #333; border-top: 0; }

/* Title bar and menus */
.titlebar { flex: none; display: flex; height: 39px; padding: 3px 2px 0 3px; gap: 8px; background: linear-gradient(#747474, #898989 8%, #777 35%, #4c4c4c); border-bottom: 1px solid #3e3e3e; }
.app { width: 33px; height: 33px; background: linear-gradient(#999, #656565); border: 1px solid #333; box-shadow: inset 0 0 0 1px #999; }
.app svg { width: 31px; height: 31px; stroke: none; }
.titlecol { flex: 1; min-width: 0; }
.titlerow { display: flex; align-items: center; height: 18px; }
.quick { display: flex; align-items: center; width: 151px; padding-left: 1px; flex: none; }
.q { width: 19px; height: 18px; }
.quick svg { width: 14px; height: 14px; stroke: #3a3a3a; fill: #eee; }
.quick .q { width: 20px; margin-right: -1px; }
.quick .tri { margin: 0 3px; }
.quick .dim svg { fill: #aaa; stroke: #777; }
.apptitle { flex: 1; margin: 0; display: flex; justify-content: center; gap: 13px; color: #e6e6e6; font-size: 10px; font-weight: 400; }
.combo { display: flex; align-items: center; position: relative; background: #f6f6f6; color: #707070; height: 16px; flex: none; }
.combo::after { content: ""; position: absolute; right: 3px; top: 6px; border: 3px solid transparent; border-top: 4px solid #999; border-bottom: 0; }
.combo select { appearance: none; flex: 1; min-width: 0; height: 16px; padding: 0 10px 0 3px; outline: 0; }
.combo svg { width: 14px; height: 14px; }
.wstop { width: 144px; background: #a8a8a8; border: 1px solid #888; color: #4d4d4d; }
.wstop select { padding-left: 2px; }
.wstop::after { border-top-color: #333; top: 5px; }
.tri.more { margin-left: 4px; border-top-color: #111; }
.search { width: 144px; height: 16px; margin-left: 4px; padding: 0 3px; background: #f3f3f3; border: 1px solid #999; font-style: italic; }
.search::placeholder { color: #777; }
.account { display: flex; width: 105px; align-items: center; }
.login { color: #eee; text-decoration: underline; }
.services { display: flex; align-items: center; gap: 1px; }
.services .tri { border-top-color: #333; margin: 0 3px; }
.help { margin-left: 7px; }
.wins { display: flex; gap: 4px; margin-left: auto; padding: 0 1px 0 12px; }
.wins svg { width: 10px; height: 10px; stroke: #181818; stroke-width: 2; }
.wins .thin { stroke-width: 1; }
.menus { display: flex; align-items: center; height: 20px; gap: 19px; padding-left: 3px; color: #f0f0f0; }

/* File tabs */
.filetabs { flex: none; display: flex; align-items: flex-end; height: 23px; padding-left: 17px; background: linear-gradient(#858585, #989898); border-bottom: 1px solid #555; }
.filetab { display: flex; align-items: center; justify-content: space-between; width: 106px; height: 20px; padding: 0 11px; color: #222; background: linear-gradient(#b5b5b5, #9b9b9b); clip-path: polygon(7% 0, 92% 0, 100% 100%, 0 100%); }
.filetab button { color: #555; font-size: 12px; }
.newtab { margin: 0 0 3px 2px; }
.newtab svg { width: 18px; height: 14px; }

/* Horizontal toolbars */
.bars { flex: none; display: flex; flex-direction: column; gap: 4px; padding: 2px 4px 5px; }
.barrow { display: flex; gap: 2px; }
.barrow + .barrow { gap: 1px; }
.bar { display: flex; align-items: center; height: 18px; background: #ececec; border: solid #f8f8f8; border-width: 1px 0; }
.grip { align-self: stretch; flex: none; width: 6px; margin: -1px 0; background: repeating-linear-gradient(90deg, #333 0 1px, #666 1px 3px); }
.t { width: 18px; height: 16px; }
.t.wide { width: 19px; }
.t svg { width: 14px; height: 14px; }
.off svg { stroke: #aaa; }
.drop { width: 11px; display: flex; justify-content: center; }
.drop .tri { border-top-color: #888; }
.sep { flex: none; width: 1px; height: 14px; margin: 0 3px; background: #999; }
.style { width: 96px; }
.indent select { padding-left: 14px; }
.bar .sep + .wide { width: 17px; }
.ws { width: 141px; }
.ws select { padding-left: 7px; }
.layer { width: 240px; padding-left: 1px; }
.layer select { padding-left: 2px; }
.combo .nar { width: 11px; height: 11px; }
.props { background: #e2e2e2; font-family: "Liberation Serif", serif; }
.props .grip { width: 8px; }
.props .sep { width: 3px; margin: 0 1px; height: 16px; background: none; border: solid #777; border-width: 0 1px; }
.props .combo { color: #333; }
.color { width: 122px; padding-left: 4px; }
.color select { padding-left: 1px; }
.ltype { width: 129px; }
.lweight { width: 101px; }
.ln { width: 47px; height: 1px; margin: 0 2px 0 4px; background: #222; }
.lweight .ln { width: 28px; margin-left: 3px; }
.plot { width: 96px; }
.plot select { padding-left: 6px; }

/* Work area */
.work { flex: 1; min-height: 0; display: flex; padding: 0 2px 1px 3px; gap: 5px; }
.palette { flex: none; width: 159px; display: flex; flex-direction: column; }
.palette h2 { width: 142px; height: 18px; margin: 0; padding: 2px 3px 0 2px; display: flex; gap: 5px; font-size: 10px; font-weight: 400; line-height: 16px; background: linear-gradient(#8a8a8a, #a0a0a0); border-radius: 2px 2px 0 0; color: #111; }
.palette h2 i { width: 3px; height: 10px; border: solid #555; border-width: 0 1px; }
.palbody { flex: 1; min-height: 0; display: flex; }
.palbody ul { flex: 1; margin: 0; padding: 3px 0 0; list-style: none; background: #ececec; }
.palbody li button { width: 100%; height: 34px; padding-left: 14px; gap: 5px; justify-content: flex-start; }
.palbody li svg { width: 24px; height: 26px; stroke: #444b53; }
.paltabs { width: 17px; padding-top: 2px; }
.paltabs button { width: 17px; height: 40px; background: #c6c6c6; border: solid #444; border-width: 0 1px 1px 0; box-shadow: inset 0 1px #e5e5e5; }
.paltabs .on { background: #ececec; }
.paltabs span { writing-mode: vertical-rl; text-orientation: sideways; transform: rotate(180deg); font-weight: 500; color: #111; }
.paltabs i { display: block; height: 11px; background: repeating-linear-gradient(#c6c6c6 0 3px, #444 3px 4px); }

.center { flex: 1; min-width: 0; display: flex; flex-direction: column; gap: 4px; }
.stage { flex: 1; min-height: 0; display: flex; position: relative; }
.vbar { width: 20px; flex: none; }
.vgrip { display: block; height: 6px; background: repeating-linear-gradient(#3b3b3b 0 1px, #666 1px 2px); }
.vtools { display: flex; flex-direction: column; background: #ececec; border: solid #fff; border-width: 0 1px 1px; }
.vtools button { flex: 1; min-height: 0; }
.vtools svg { width: 14px; height: 14px; }
.draw .vtools { height: 355px; }
.modify .vtools { height: 319px; }
.order .vtools { height: 74px; }
.mtext { font-size: 15px; font-weight: 600; }
.rightbars { display: flex; flex-direction: column; margin-left: 4px; gap: 2px; }

.frame { flex: 1; min-width: 0; margin-left: 2px; display: flex; flex-direction: column; border: solid #929292; border-width: 1px 2px 0; }
.view { flex: 1; min-height: 0; display: flex; }
.canvas { flex: 1; position: relative; background: #1b222a; overflow: hidden; }
.drawing { position: absolute; inset: 0; width: 100%; height: 100%; stroke: #eee; }
.ucsmark text { font: 300 16px "Open Sans", sans-serif; fill: #eee; stroke: none; }
.arrows { fill: #fff; stroke: none; }
.dims text { font: 23px "Liberation Sans", sans-serif; fill: #fff; stroke: none; text-anchor: middle; }
.drawing .snap { stroke: #0d9c12; stroke-width: 1.500; }
.vplabel { position: absolute; left: 4px; top: 4px; color: #e2e2e2; font-size: 10px; }
.viewcube { position: absolute; right: 9px; top: 8px; width: 74px; height: 74px; color: #aeb4b8; }
.viewcube svg { width: 74px; height: 74px; }
.viewcube text { font: 10px "Noto Sans CJK SC", sans-serif; fill: #333b42; stroke: none; text-anchor: middle; }
.viewcube span { position: absolute; }
.viewcube .n { left: 32px; top: 0; }
.viewcube .s { left: 32px; bottom: -1px; }
.viewcube .w { left: 1px; top: 30px; }
.viewcube .e { right: 1px; top: 30px; }
.wcs { position: absolute; right: 28px; top: 94px; width: 38px; height: 13px; gap: 5px; font: 8px/11px "Liberation Sans", sans-serif; background: #90989e; border: 1px solid #a8afb4; border-radius: 3px; color: #dce0e2; }
.wcs i { width: 7px; height: 4px; border: 1px solid #aab0b5; }
.dyn { position: absolute; left: 382px; top: 293px; display: flex; gap: 4px; }
.dyn label, .dyn input { height: 18px; border: 1px solid #57504f; background: #999090; line-height: 16px; color: #111; }
.dyn label { width: 55px; padding-left: 2px; }
.dyn input { width: 53px; padding: 0 2px; }
.dyn .sel { width: 58px; padding: 0 1px; color: #fff; border-color: #fff; background: linear-gradient(90deg, #2e8fe8 50px, #fff 50px); }
.vscroll { width: 14px; background: #f1f1f1; display: flex; flex-direction: column; align-items: center; justify-content: space-between; padding: 5px 0; position: relative; }
.thumb { background: linear-gradient(135deg, #fff, #ccc); border: 1px solid #999; width: 11px; height: 11px; }
.vscroll .thumb { position: absolute; top: 34%; }
.layouts { flex: none; height: 14px; display: flex; align-items: center; background: #f0f0f0; color: #222; }
.nav { display: flex; width: 46px; }
.nav button { flex: 1; height: 13px; border-right: 1px solid #bbb; }
.nav svg { width: 8px; height: 8px; }
.nav .f { fill: #444; stroke: none; }
.ltab { height: 14px; padding: 0 4px; }
.ltab.on { background: #1b222a; color: #fff; width: 37px; margin-left: 1px; clip-path: polygon(0 0, 100% 0, 88% 100%, 15% 100%); }
.hscroll { margin-left: auto; width: 35%; display: flex; align-items: center; gap: 8px; padding: 0 17px 0 8px; height: 14px; border-left: 1px solid #999; }
.hscroll .right { margin-left: auto; }

.floatbar { position: absolute; left: -6px; top: 70px; height: 18px; display: flex; align-items: center; background: #ececec; border: solid #fff; border-width: 1px 0; }
.floatbar .grip { width: 5px; }
.floatbar .t { width: 19px; }
.floatbar .t svg { width: 15px; height: 15px; }
.floatbar .sep { margin: 0 2px; }
.floatbar .x { width: 5px; height: 18px; align-items: flex-start; color: #fff; background: #4b4b4b; line-height: 9px; font-weight: 700; }

.command { flex: none; display: flex; height: 41px; }
.cmdside { width: 19px; display: flex; flex-direction: column; align-items: center; justify-content: space-between; background: linear-gradient(#666, #444); padding: 3px 0 1px; }
.cmdside i { width: 14px; height: 5px; background: repeating-linear-gradient(90deg, #aaa 0 1px, #666 1px 2px); }
.cmdside svg { width: 12px; height: 12px; stroke: #eee; }
.cmdmain { flex: 1; font-family: "Noto Sans CJK SC", sans-serif; }
.history { height: 23px; padding: 7px 2px 0; background: #c3c3c3; border-bottom: 1px solid #888; }
.prompt { display: flex; align-items: center; height: 18px; padding-left: 3px; gap: 3px; background: #fdfdfd; }
.prompt svg { width: 14px; height: 14px; }
.prompt .tri { margin-right: 2px; border-top-color: #777; }
.prompt b { font: bold 9px "DejaVu Sans Mono", monospace; }
.prompt span { margin-left: 1px; }
.prompt input { flex: 1; outline: 0; }

/* Status bar */
.status { flex: none; display: flex; height: 19px; align-items: stretch; background: linear-gradient(#8b8b8b, #6a6a6a); border-top: 1px solid #444; }
.status output { width: 179px; padding: 3px 0 0 12px; white-space: nowrap; color: #111; font: 11px/14px "Liberation Serif", serif; }
.modes { display: grid; grid-template-columns: repeat(15, 1fr); width: 266px; }
.modes button, .tray button { background: linear-gradient(#b5b5b5, #8f8f8f); border-right: 1px solid #666; }
.modes .lit { background: linear-gradient(#c9e6f2, #8dbfd3); }
.modes svg, .tray svg { width: 15px; height: 15px; }
.tray { display: flex; align-items: center; margin-left: auto; }
.tray button { width: 18px; height: 18px; }
.tray .model { width: 24px; color: #111; }
.tray .ratio { width: 43px; margin: 0 7px 0 15px; gap: 2px; }
.tray .tri { margin: 0 3px; }
.resize { width: 12px; height: 10px; margin: 5px 0 0 6px; background: repeating-linear-gradient(90deg, #ccc 0 1px, transparent 1px 4px); clip-path: polygon(100% 0, 100% 100%, 0 100%); }
.watermark { position: absolute; right: 15px; bottom: 6px; font: 300 22px/28px "Noto Sans CJK SC", sans-serif; color: #fff; text-shadow: 1px 1px 1px #555, 0 0 1px #777; pointer-events: none; }
```
